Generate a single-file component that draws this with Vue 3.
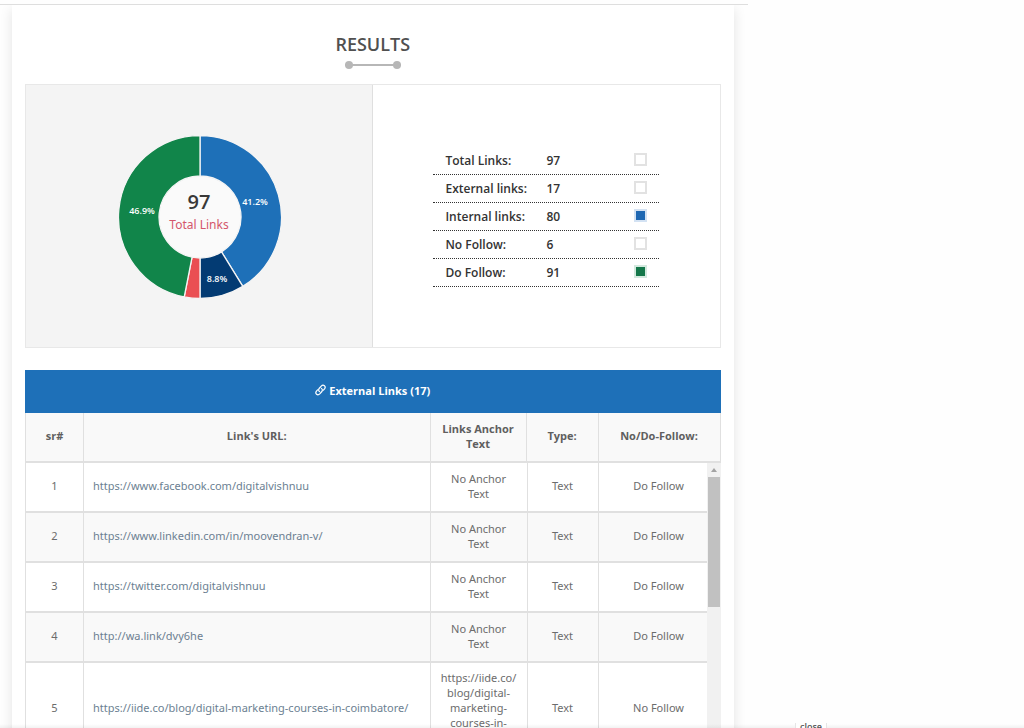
<script setup>
const slices = [
  { color: '#1e70b8', share: 41.2, label: '41.2%', x: 137, y: 70 },
  { color: '#033b73', share: 8.8, label: '8.8%', x: 99, y: 147 },
  { color: '#ea4f53', share: 3.1, label: '', x: 0, y: 0 },
  { color: '#11854a', share: 46.9, label: '46.9%', x: 24, y: 79 },
]
const cx = 82
const cy = 82
const R = 81.5
const r = 41
const at = (radius, pct) => {
  const a = (pct / 100) * Math.PI * 2
  return `${(cx + radius * Math.sin(a)).toFixed(2)} ${(cy - radius * Math.cos(a)).toFixed(2)}`
}
let start = 0
for (const s of slices) {
  const end = start + s.share
  s.d = `M${at(R, start)}A${R} ${R} 0 0 1 ${at(R, end)}L${at(r, end)}A${r} ${r} 0 0 0 ${at(r, start)}Z`
  start = end
}

const totals = [
  { name: 'Total Links:', value: 97, tone: '' },
  { name: 'External links:', value: 17, tone: '' },
  { name: 'Internal links:', value: 80, tone: 'blue' },
  { name: 'No Follow:', value: 6, tone: '' },
  { name: 'Do Follow:', value: 91, tone: 'green' },
]

const links = [
  { url: 'https://www.facebook.com/digitalvishnuu', anchor: ['No Anchor Text'], follow: 'Do Follow' },
  { url: 'https://www.linkedin.com/in/moovendran-v/', anchor: ['No Anchor Text'], follow: 'Do Follow' },
  { url: 'https://twitter.com/digitalvishnuu', anchor: ['No Anchor Text'], follow: 'Do Follow' },
  { url: 'http://wa.link/dvy6he', anchor: ['No Anchor Text'], follow: 'Do Follow' },
  {
    url: 'https://iide.co/blog/digital-marketing-courses-in-coimbatore/',
    anchor: ['https://iide.co/', 'blog/digital-', 'marketing-', 'courses-in-', 'coimbatore/'],
    follow: 'No Follow',
  },
]
</script>

<template>
  <div class="page">
    <main class="column">
      <section class="card">
        <h2 class="title">RESULTS</h2>
        <div class="rule"></div>

        <div class="summary">
          <div class="chart">
            <svg class="donut" viewBox="0 0 164 164" role="img" aria-label="Link distribution">
              <circle :cx="cx" :cy="cy" r="42" fill="#fafafa" />
              <path v-for="s in slices" :key="s.color" :d="s.d" :fill="s.color" stroke="#f4f4f4" stroke-width="1.3" />
              <text v-for="s in slices" :key="s.label" :x="s.x" :y="s.y" class="pct">{{ s.label }}</text>
              <text x="81" y="74" class="big">97</text>
              <text x="81" y="94" class="caption">Total Links</text>
            </svg>
          </div>
          <div class="totals">
            <dl class="list">
              <div v-for="t in totals" :key="t.name" class="item">
                <dt>{{ t.name }}</dt>
                <dd>{{ t.value }}</dd>
                <dd class="swatch" :class="t.tone"></dd>
              </div>
            </dl>
          </div>
        </div>

        <div class="banner">
          <svg class="chain" viewBox="0 0 12 12" aria-hidden="true">
            <g fill="none" stroke="#fff" stroke-width="1.3" stroke-linecap="round">
              <path d="M5 7.8C3.6 6.7 3.8 5.1 4.7 4.1L6.8 1.7C7.8 .7 9.4 .6 10.3 1.4C11.3 2.3 11.2 3.8 10.4 4.8L9.2 6.2" />
              <path d="M7 4.2C8.4 5.3 8.2 6.9 7.3 7.9L5.2 10.3C4.2 11.3 2.6 11.4 1.7 10.6C.7 9.7 .8 8.2 1.6 7.2L2.8 5.8" />
            </g>
          </svg>
          <span>External Links (17)</span>
        </div>

        <table class="grid head">
          <colgroup><col class="c-sr"><col><col class="c-anchor"><col class="c-type"><col class="c-follow"></colgroup>
          <thead>
            <tr>
              <th>sr#</th>
              <th>Link's URL:</th>
              <th>Links Anchor Text</th>
              <th>Type:</th>
              <th>No/Do-Follow:</th>
            </tr>
          </thead>
        </table>

        <div class="scroller">
          <table class="grid body">
            <colgroup><col class="c-sr"><col><col class="c-anchor"><col class="c-type"><col class="c-follow"></colgroup>
            <tbody>
              <tr v-for="(l, i) in links" :key="l.url">
                <td>{{ i + 1 }}</td>
                <td class="url"><a :href="l.url">{{ l.url }}</a></td>
                <td class="anchor"><template v-for="(part, n) in l.anchor" :key="n">{{ part }}<wbr></template></td>
                <td>Text</td>
                <td class="follow">{{ l.follow }}</td>
              </tr>
            </tbody>
          </table>
          <div class="track" aria-hidden="true">
            <span class="arrow"></span>
            <span class="thumb"></span>
          </div>
        </div>
      </section>
    </main>
    <div class="dock"><button class="close" type="button">close</button></div>
  </div>
</template>

<style>
html,
body {
  background: #fefefe;
}
</style>

<style scoped>
.page {
  position: relative;
  height: 100vh;
  overflow: hidden;
  box-sizing: border-box;
  padding-top: 4px;
  font-family: "Noto Sans", "Open Sans", sans-serif;
  font-size: 11px;
  line-height: 15px;
  color: #6c6c6c;
}
.column {
  box-sizing: border-box;
  width: 73%;
  padding: 0 14px 0 12px;
  border-top: 1px solid #dedede;
}
.card {
  padding: 0 13px 40px;
  background: #fff;
  box-shadow: 0 4px 12px rgba(0, 0, 0, 0.11);
  clip-path: inset(0 -13px 0 -12px);
}
.title {
  margin: 0;
  padding-top: 27px;
  text-align: center;
  font: 600 18px/24px "Open Sans", sans-serif;
  color: #505050;
}
.rule {
  display: flex;
  justify-content: space-between;
  align-items: center;
  width: 56px;
  height: 8px;
  margin: 5px auto 15px;
  background: linear-gradient(#b7b7b7, #b7b7b7) center / 100% 2px no-repeat;
}
.rule::before,
.rule::after {
  content: "";
  width: 8px;
  height: 8px;
  border-radius: 50%;
  background: #b7b7b7;
}
.summary {
  display: grid;
  grid-template-columns: 1fr 1fr;
  border: 1px solid #e8e8e8;
}
.chart {
  display: flex;
  justify-content: center;
  align-items: center;
  box-sizing: border-box;
  min-height: 262px;
  padding: 2px 0 0 2px;
  border-right: 1px solid #dfdfdf;
  background: #f4f4f4;
}
.donut {
  width: 164px;
  height: 164px;
}
.donut text {
  text-anchor: middle;
}
.pct {
  font: 600 9px "Open Sans", sans-serif;
  fill: #fff;
}
.big {
  font: 600 20px "Open Sans", sans-serif;
  fill: #383838;
}
.caption {
  font: 400 12px "Noto Sans", sans-serif;
  fill: #d4566b;
}
.totals {
  display: flex;
  justify-content: center;
  align-items: center;
}
.list {
  width: 65%;
  margin: 2px 0 0;
}
.item {
  display: grid;
  grid-template-columns: 101px 1fr 13px;
  align-items: center;
  box-sizing: border-box;
  min-height: 28px;
  padding: 0 12px;
  border-bottom: 1px dotted #333;
  font: 600 12px/27px "Open Sans", sans-serif;
  color: #333;
}
dd {
  margin: 0;
}
.swatch {
  width: 9px;
  height: 9px;
  border: 2px solid #e2e2e2;
  margin-bottom: 3px;
}
.swatch.blue {
  background: #1e68b3;
  border-color: #d3e2f3;
}
.swatch.green {
  background: #14774a;
  border-color: #d3e9de;
}
.banner {
  display: flex;
  justify-content: center;
  align-items: center;
  gap: 3px;
  box-sizing: border-box;
  min-height: 43px;
  margin-top: 22px;
  padding-bottom: 3px;
  background: #1e70b8;
  color: #fff;
  font: 700 11px/15px "Open Sans", sans-serif;
}
.chain {
  width: 11px;
  height: 12px;
}
.grid {
  width: 100%;
  table-layout: fixed;
  border-collapse: separate;
  border-spacing: 0;
  border-left: 1px solid #e0e0e0;
}
.c-sr {
  width: 58px;
}
.c-anchor {
  width: 97px;
}
.c-type {
  width: 71px;
}
.head .c-anchor {
  width: 96px;
}
.head .c-type {
  width: 72px;
}
.head .c-follow {
  width: 122px;
}
.body .c-follow {
  width: 108px;
}
th,
td {
  box-sizing: border-box;
  height: 50px;
  padding: 7px 8px 10px;
  border-right: 1px solid #e0e0e0;
  border-bottom: 2px solid #e0e0e0;
  text-align: center;
  vertical-align: middle;
}
th {
  background: #f9f9f9;
  font: 700 11px/15px "Open Sans", sans-serif;
  color: #5f5f5f;
}
.body tr:nth-child(even) {
  background: #f9f9f9;
}
.body td:last-child {
  border-right: 0;
}
.body .url {
  padding-left: 9px;
  text-align: left;
}
.body .anchor {
  padding-left: 10px;
  padding-right: 10px;
}
.body .follow {
  padding-left: 20px;
}
.url a {
  color: #6c7f92;
  text-decoration: none;
}
.scroller {
  display: grid;
  grid-template-columns: 1fr 14px;
}
.track {
  background: #f1f1f1;
}
.arrow {
  display: block;
  width: 0;
  margin: 5px auto 5px;
  border: 3px solid transparent;
  border-top: 0;
  border-bottom: 4px solid #a3a3a3;
}
.thumb {
  display: block;
  height: 130px;
  margin: 0 1px;
  background: #c1c1c1;
}
.dock {
  position: absolute;
  left: 0;
  right: 0;
  bottom: 0;
  height: 5px;
  overflow: hidden;
  background: linear-gradient(transparent 20%, rgba(0, 0, 0, 0.05));
}
.close {
  display: block;
  margin-left: 795px;
  padding: 0 4px;
  border: 1px solid #e5e5e5;
  border-top: 0;
  background: #fefefe;
  color: #555;
  font: 600 9px/8px "Open Sans", sans-serif;
}
</style>
